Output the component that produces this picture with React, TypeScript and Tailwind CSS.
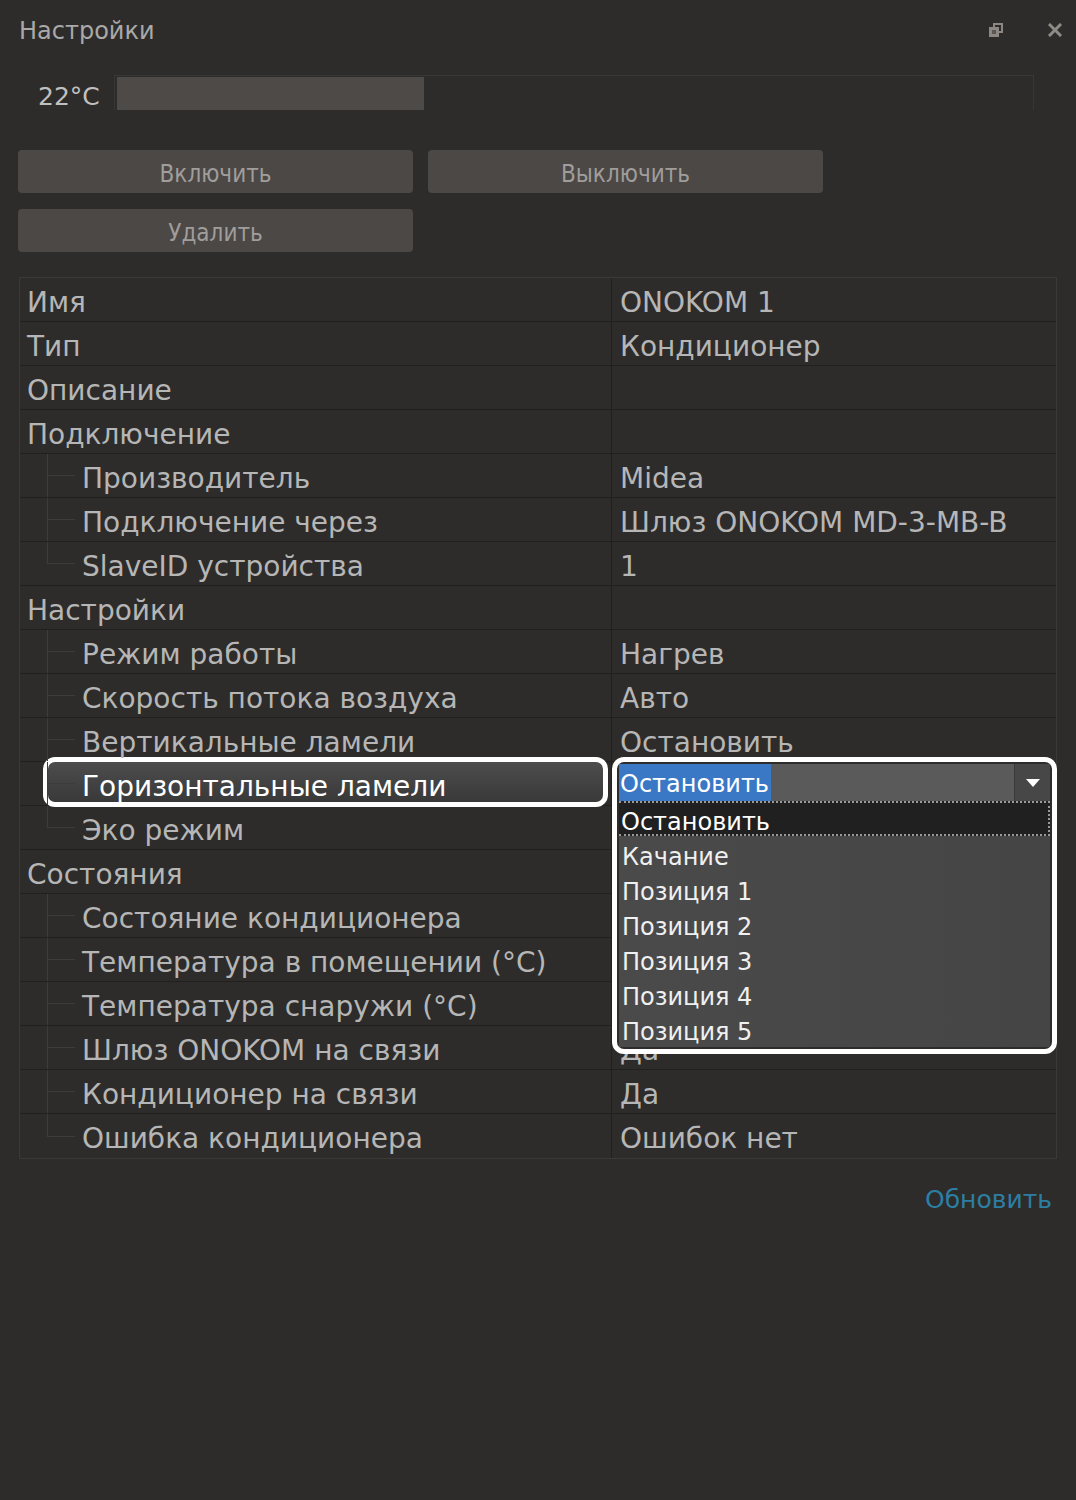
import React from "react";

type Row = {
  label: string;
  value: string;
  child?: boolean;
  last?: boolean;
  active?: boolean;
};

// values hidden behind the open dropdown are left empty
const rows: Row[] = [
  { label: "Имя", value: "ONOKOM 1" },
  { label: "Тип", value: "Кондиционер" },
  { label: "Описание", value: "" },
  { label: "Подключение", value: "" },
  { label: "Производитель", value: "Midea", child: true },
  { label: "Подключение через", value: "Шлюз ONOKOM MD-3-MB-B", child: true },
  { label: "SlaveID устройства", value: "1", child: true, last: true },
  { label: "Настройки", value: "" },
  { label: "Режим работы", value: "Нагрев", child: true },
  { label: "Скорость потока воздуха", value: "Авто", child: true },
  { label: "Вертикальные ламели", value: "Остановить", child: true },
  { label: "Горизонтальные ламели", value: "Остановить", child: true, active: true },
  { label: "Эко режим", value: "", child: true, last: true },
  { label: "Состояния", value: "" },
  { label: "Состояние кондиционера", value: "", child: true },
  { label: "Температура в помещении (°C)", value: "", child: true },
  { label: "Температура снаружи (°C)", value: "", child: true },
  { label: "Шлюз ONOKOM на связи", value: "Да", child: true },
  { label: "Кондиционер на связи", value: "Да", child: true },
  { label: "Ошибка кондиционера", value: "Ошибок нет", child: true, last: true },
];

const options = ["Остановить", "Качание", "Позиция 1", "Позиция 2", "Позиция 3", "Позиция 4", "Позиция 5"];

function RestoreIcon() {
  return (
    <svg width="14" height="14" viewBox="0 0 14 14">
      <rect x="5" y="1" width="8" height="8" fill="none" stroke="#8c8782" strokeWidth="2" />
      <rect x="1" y="5" width="8" height="8" fill="#8c8782" stroke="#8c8782" strokeWidth="2" />
      <rect x="3" y="7" width="4" height="4" fill="#5a5653" />
    </svg>
  );
}

function CloseIcon() {
  return (
    <svg width="14" height="14" viewBox="0 0 14 14">
      <path d="M2 2 L12 12 M12 2 L2 12" stroke="#8e8a86" strokeWidth="3" strokeLinecap="square" />
    </svg>
  );
}

function Dropdown() {
  return (
    <div className="absolute left-0 -top-[5px] z-20 w-[445px] h-[297px] border-[5px] border-white rounded-[12px] bg-[#2d2c2a] p-[2px] flex flex-col">
      <div className="flex h-[37px] bg-[#5a5a5a]">
        <div className="flex-1 flex items-center">
          <span className="bg-[#3a78c6] text-white text-[24px] leading-[34px] pt-[3px] pl-[1px] pr-[2px]">Остановить</span>
        </div>
        <div className="w-[36px] bg-[#474747] border-l border-[#3a3a3a] flex items-center justify-center">
          <svg width="14" height="8" viewBox="0 0 14 8">
            <path d="M0 0 L14 0 L7 8 Z" fill="#ffffff" />
          </svg>
        </div>
      </div>
      <div className="flex-1 flex flex-col bg-linear-to-r from-[#4a4a4a] to-[#454545]">
        {options.map((o, i) => (
          <div
            key={o}
            className={
              i === 0
                ? "h-[35px] flex items-center pt-[6px] pl-[2px] bg-[#202020] border-y-2 border-r-2 border-dotted border-[#9a9a9a] text-[24px] text-white"
                : "h-[35px] flex items-center pt-[7px] pl-[3px] text-[24px] text-[#f0f0f0]"
            }
          >
            {o}
          </div>
        ))}
      </div>
    </div>
  );
}

export default function App() {
  return (
    <div className="w-[1076px] h-[1500px] bg-[#2d2c2a] flex flex-col font-['DejaVu_Sans',sans-serif] text-[#b6b6b6]">
      {/* header */}
      <div className="h-[60px] flex items-center pl-[19px] pr-[14px]">
        <span className="text-[24px] text-[#a9a9a9] flex-1 pt-[2px]">Настройки</span>
        <div className="flex items-center gap-[45px]">
          <RestoreIcon />
          <CloseIcon />
        </div>
      </div>

      {/* temperature slider */}
      <div className="mt-[15px] h-[35px] flex items-center">
        <span className="w-[114px] pl-[38px] text-[25px] text-[#c0c0c0] pt-[8px]">22°C</span>
        <div className="flex-1 mr-[42px] h-[35px] border-t border-r border-l border-[#383735] pl-[2px] pt-[1px]">
          <div className="w-[307px] h-[33px] bg-[#4e4a47]" />
        </div>
      </div>

      {/* buttons */}
      <div className="mt-[40px] pl-[18px] flex flex-col gap-[16px] font-['DejaVu_Sans_Condensed','DejaVu_Sans',sans-serif] text-[24px] text-[#a09d9b]">
        <div className="flex gap-[15px]">
          <button className="w-[395px] h-[43px] rounded-[4px] bg-[#4b4846] pt-[4px]">Включить</button>
          <button className="w-[395px] h-[43px] rounded-[4px] bg-[#4b4846] pt-[4px]">Выключить</button>
        </div>
        <div className="flex">
          <button className="w-[395px] h-[43px] rounded-[4px] bg-[#4b4846] pt-[4px]">Удалить</button>
        </div>
      </div>

      {/* property grid */}
      <div className="mt-[25px] ml-[19px] w-[1038px] border border-[#3b3a38] text-[28px]">
        {rows.map((r, i) => (
          <div
            key={r.label}
            className={
              i === rows.length - 1 ? "flex h-[44px]" : "flex h-[44px] border-b border-[#21201f]"
            }
          >
            <div className="relative w-[592px] border-r border-[#21201f] flex items-stretch">
              {r.active && (
                <div className="absolute left-[23px] right-[3px] -top-[5px] -bottom-[2px] border-[5px] border-white rounded-[12px] bg-linear-to-b from-[#4d4d4d] to-[#393939]" />
              )}
              {r.child ? (
                <div className="relative z-10 flex items-stretch">
                  <div className="ml-[27px] w-[28px] flex flex-col">
                    <div className="flex-1 border-l border-b border-[#3e3c3a]" />
                    <div className={r.last ? "flex-1" : "flex-1 border-l border-[#3e3c3a]"} />
                  </div>
                  <span className={r.active ? "self-center pt-[6px] pl-[7px] text-white" : "self-center pt-[6px] pl-[7px]"}>
                    {r.label}
                  </span>
                </div>
              ) : (
                <span className="self-center pt-[6px] pl-[7px]">{r.label}</span>
              )}
            </div>
            <div className="relative flex-1 flex items-center pl-[8px]">
              {r.active ? <Dropdown /> : <span className="pt-[6px]">{r.value}</span>}
            </div>
          </div>
        ))}
      </div>

      {/* footer link */}
      <div className="mt-[22px] flex justify-end pr-[24px]">
        <span className="text-[25px] text-[#2d7ea3]">Обновить</span>
      </div>
    </div>
  );
}
